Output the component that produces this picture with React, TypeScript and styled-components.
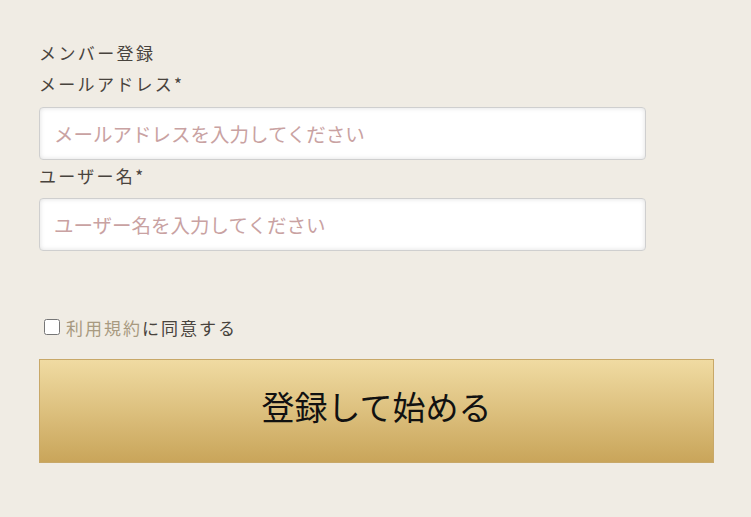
import React from "react";
import styled, { createGlobalStyle } from "styled-components";

const Global = createGlobalStyle`
  html, body { margin: 0; padding: 0; background: #f0ece4; }
  body { font-family: "Noto Sans CJK JP", "Noto Sans", sans-serif; color: #45403a; }
`;

const Page = styled.div`
  width: 675px;
  margin-left: 39px;
  padding-top: 37px;
  display: flex;
  flex-direction: column;
`;

const Title = styled.div`
  font-size: 17px;
  line-height: 31px;
  letter-spacing: 2.4px;
  color: #48433d;
`;

const Label = styled.label`
  font-size: 17px;
  line-height: 31px;
  letter-spacing: 2.3px;
  color: #48433d;
  display: block;
`;

const Input = styled.input<{ $mt: number }>`
  box-sizing: border-box;
  width: 607px;
  height: 53px;
  margin-top: ${(p) => p.$mt}px;
  padding: 0 14px;
  border: 1px solid #cfcfcf;
  border-radius: 4px;
  background: #fff;
  box-shadow: inset 0 0 5px rgba(0, 0, 0, 0.13);
  font-family: "Noto Sans CJK JP", "Noto Sans", sans-serif;
  font-size: 19.5px;
  letter-spacing: 0;
  color: #333;
  outline: none;
  &::placeholder { color: #c9a2a2; }
`;

const AgreeRow = styled.div`
  display: flex;
  align-items: center;
  margin-top: 66px;
  padding-left: 5px;
  height: 20px;
  font-size: 17px;
  letter-spacing: 2px;
  color: #48433d;
`;

const Check = styled.input`
  width: 16px;
  height: 16px;
  margin: 0 6px 0 0;
`;

const TermsLink = styled.span`
  color: #a89a80;
`;

const Submit = styled.button`
  margin-top: 22px;
  height: 104px;
  width: 675px;
  border: 1px solid #c8a868;
  background: linear-gradient(to bottom, #f0dba2, #c9a55a);
  font-family: "Noto Sans CJK JP", "Noto Sans", sans-serif;
  font-size: 33px;
  color: #111;
  cursor: pointer;
  padding: 0 0 10px 0;
`;

export default function App() {
  return (
    <>
      <Global />
      <Page>
        <Title>メンバー登録</Title>
        <Label>メールアドレス*</Label>
        <Input $mt={8} type="email" placeholder="メールアドレスを入力してください" />
        <Label>ユーザー名*</Label>
        <Input $mt={7} type="text" placeholder="ユーザー名を入力してください" />
        <AgreeRow>
          <Check type="checkbox" />
          <TermsLink>利用規約</TermsLink>に同意する
        </AgreeRow>
        <Submit>登録して始める</Submit>
      </Page>
    </>
  );
}
